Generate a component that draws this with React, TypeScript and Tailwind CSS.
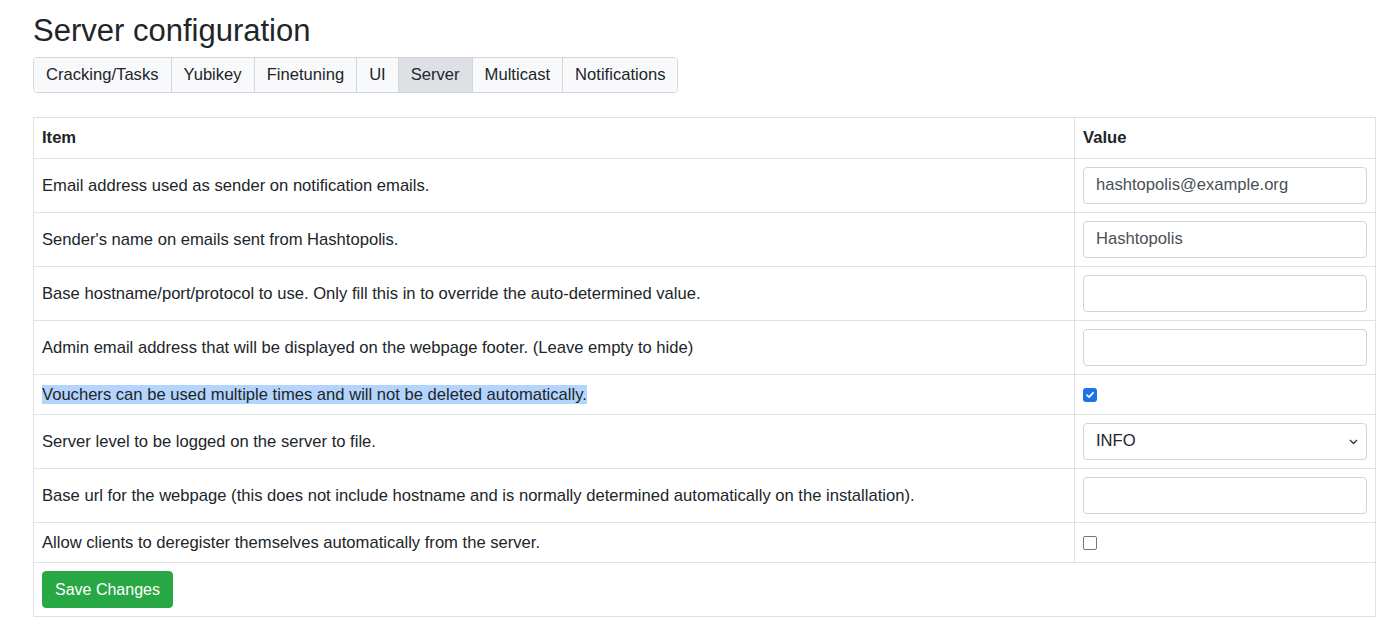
import React from "react";

const tabs = ["Cracking/Tasks", "Yubikey", "Finetuning", "UI", "Server", "Multicast", "Notifications"];

type Row =
    | { label: string; kind: "text"; value: string }
    | { label: string; kind: "check"; checked: boolean; selected?: boolean }
    | { label: string; kind: "select"; value: string };

const rows: Row[] = [
    { label: "Email address used as sender on notification emails.", kind: "text", value: "hashtopolis@example.org" },
    { label: "Sender's name on emails sent from Hashtopolis.", kind: "text", value: "Hashtopolis" },
    { label: "Base hostname/port/protocol to use. Only fill this in to override the auto-determined value.", kind: "text", value: "" },
    { label: "Admin email address that will be displayed on the webpage footer. (Leave empty to hide)", kind: "text", value: "" },
    { label: "Vouchers can be used multiple times and will not be deleted automatically.", kind: "check", checked: true, selected: true },
    { label: "Server level to be logged on the server to file.", kind: "select", value: "INFO" },
    { label: "Base url for the webpage (this does not include hostname and is normally determined automatically on the installation).", kind: "text", value: "" },
    { label: "Allow clients to deregister themselves automatically from the server.", kind: "check", checked: false },
];

function Checkbox({ checked }: { checked: boolean }): JSX.Element {
    if (checked) {
        return (
            <span className="inline-flex w-[14px] h-[14px] rounded-[3px] bg-[#1a73e8] items-center justify-center align-middle">
                <svg width="10" height="10" viewBox="0 0 10 10">
                    <path d="M2 5.2 L4.1 7.2 L8 2.8" fill="none" stroke="white" strokeWidth="1.8" strokeLinecap="round" strokeLinejoin="round" />
                </svg>
            </span>
        );
    }
    return <span className="inline-block w-[14px] h-[14px] rounded-[2px] border-[1.5px] border-[#767676] bg-white align-middle" />;
}

function ValueCell({ row }: { row: Row }): JSX.Element {
    if (row.kind === "check") {
        return <div className="h-[23px] flex items-center"><Checkbox checked={row.checked} /></div>;
    }
    if (row.kind === "select") {
        return (
            <div className="h-[37px] border border-[#ced4da] rounded-[4px] bg-white flex items-center justify-between pl-3 pr-[8px]">
                <span>{row.value}</span>
                <svg width="9" height="6" viewBox="0 0 9 6">
                    <path d="M1 1 L4.5 4.5 L8 1" fill="none" stroke="#333" strokeWidth="1.3" />
                </svg>
            </div>
        );
    }
    return (
        <div className="h-[37px] border border-[#ced4da] rounded-[4px] bg-white flex items-center px-3 text-[#495057]">
            {row.value}
        </div>
    );
}

export default function App(): JSX.Element {
    return (
        <div className="min-h-screen bg-white text-[#212529] text-[16.6px] font-['Liberation_Sans',Arial,sans-serif] pl-[33px] pr-[24px] pt-3">
            <h2 className="text-[31px] leading-[1.2] font-medium mb-2">Server configuration</h2>

            <div className="inline-flex border border-[#d3d7db] rounded-[4px] overflow-hidden">
                {tabs.map((t, i) => (
                    <div
                        key={t}
                        className={
                            (t === "Server" ? "bg-[#dde1e5] " : "bg-[#f8f9fa] ") +
                            (i > 0 ? "border-l border-[#d3d7db] " : "") +
                            "px-3 py-[5px] leading-6"
                        }
                    >
                        {t}
                    </div>
                ))}
            </div>

            <table className="mt-6 w-full border-collapse border border-[#dee2e6]">
                <colgroup>
                    <col />
                    <col className="w-[301px]" />
                </colgroup>
                <thead>
                    <tr className="border-b border-[#dee2e6]">
                        <th className="text-left font-bold px-2 py-2 leading-6">Item</th>
                        <th className="text-left font-bold px-2 py-2 leading-6 border-l border-[#dee2e6]">Value</th>
                    </tr>
                </thead>
                <tbody>
                    {rows.map((r) => (
                        <tr key={r.label} className="border-b border-[#dee2e6]">
                            <td className="px-2 py-2 leading-[23px] align-middle">
                                {"selected" in r && r.selected ? <span className="bg-[#b3d4fc]">{r.label}</span> : r.label}
                            </td>
                            <td className="px-2 py-2 align-middle border-l border-[#dee2e6]">
                                <ValueCell row={r} />
                            </td>
                        </tr>
                    ))}
                    <tr>
                        <td colSpan={2} className="px-2 py-2">
                            <button className="bg-[#28a745] border border-[#28a745] text-white text-base rounded-[4px] px-3 h-[37px] leading-6">
                                Save Changes
                            </button>
                        </td>
                    </tr>
                </tbody>
            </table>
        </div>
    );
}
